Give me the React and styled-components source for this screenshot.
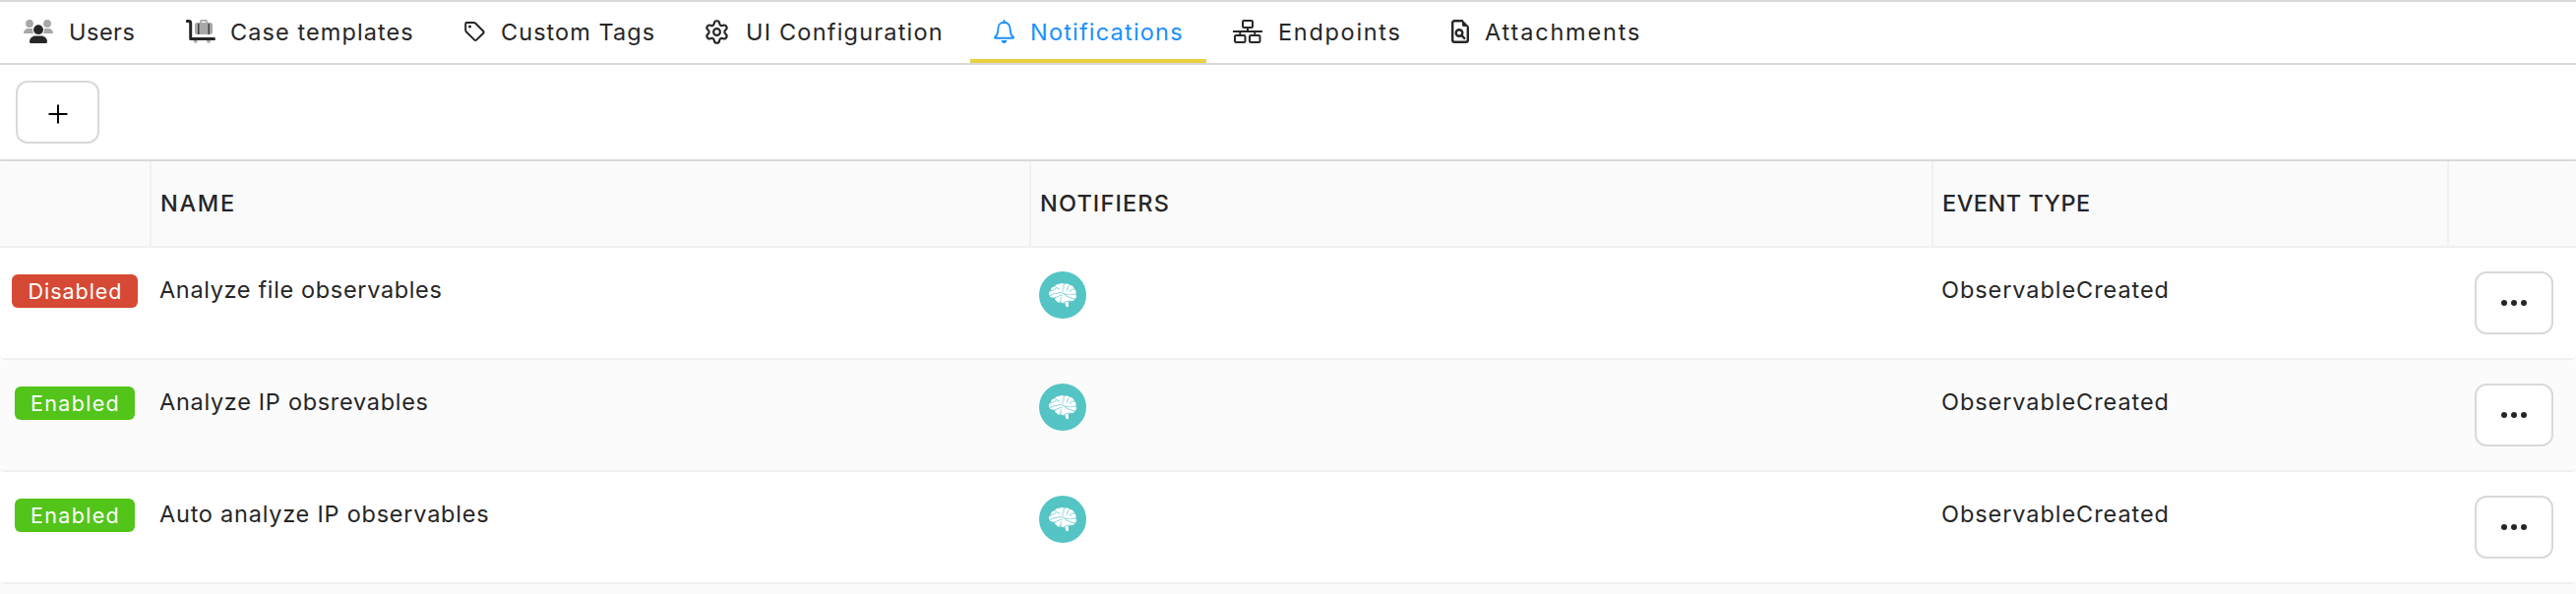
import React from "react";
import styled, { createGlobalStyle } from "styled-components";
import { Settings } from "lucide-react";

const INK = "#262626";
const MUTED = "#a8a8a8";
const BLUE = "#1890ff";

const GlobalStyle = createGlobalStyle`
  * { box-sizing: border-box; }
  body {
    margin: 0;
    background: #fff;
    color: ${INK};
    font-family: Inter, "Open Sans", sans-serif;
    font-size: 23.5px;
  }
`;

const Page = styled.div`
  height: 604px;
  overflow: hidden;
  display: flex;
  flex-direction: column;
  border-top: 2px solid #d9d9d9;
`;

const TabBar = styled.nav`
  display: flex;
  flex: 0 0 64px;
  border-bottom: 2px solid #d9d9d9;
`;

const Tab = styled.div`
  display: flex;
  align-items: center;
  width: ${(p) => p.$width}px;
  padding: 0 0 2px ${(p) => p.$inset}px;
  color: ${(p) => (p.$active ? BLUE : "inherit")};
  box-shadow: ${(p) => (p.$active ? "inset 0 -4px 0 #e8d040" : "none")};
`;

const TabIcon = styled.span`
  display: flex;
  align-items: center;
  flex: 0 0 ${(p) => p.$width}px;
  height: 24px;
`;

const Label = styled.span`
  white-space: nowrap;
  letter-spacing: ${(p) => p.$track || 0}px;
`;

const Toolbar = styled.div`
  display: flex;
  align-items: center;
  flex: 0 0 98px;
  padding-left: 16px;
  border-bottom: 2px solid #d9d9d9;
`;

const IconButton = styled.button`
  display: flex;
  align-items: center;
  justify-content: center;
  width: ${(p) => p.$width}px;
  height: 64px;
  padding: 0;
  border: 2px solid #d9d9d9;
  border-radius: 12px;
  background: #fff;
  color: ${INK};
`;

const Row = styled.div`
  display: grid;
  grid-template-columns: 154px 894px 917px 524px 1fr;
  flex: 0 0 114px;
  border-bottom: 2px solid #f0f0f0;
  border-radius: 4px;
  background: ${(p) => (p.$striped ? "#fbfbfb" : "#fff")};
`;

const HeaderRow = styled(Row)`
  flex-basis: 88px;
  background: #fafafa;
  border-radius: 4px 4px 0 0;
  font-weight: 500;
`;

const HeaderCell = styled.div`
  display: flex;
  align-items: center;
  padding: 0 0 2px 9px;
  border-right: 2px solid #f0f0f0;

  &:last-child { border-right: 0; }
`;

const Cell = styled.div`
  padding: 24px 0 0 8px;
  line-height: 38px;
`;

const StatusCell = styled(Cell)`
  display: flex;
  justify-content: center;
  padding: 27px 2px 0 0;
`;

const ActionCell = styled(Cell)`
  display: flex;
  padding-left: 26px;
`;

const Tag = styled.span`
  display: flex;
  justify-content: center;
  width: ${(p) => (p.$on ? 122 : 128)}px;
  height: 34px;
  padding-left: 1px;
  border-radius: 6px;
  background: ${(p) => (p.$on ? "#52c41a" : "#d64a35")};
  color: #fff;
  font-size: 21.5px;
  line-height: 34px;
`;

const Avatar = styled.div`
  width: 48px;
  height: 48px;
  border-radius: 50%;
  background: #55c4c5;

  svg { display: block; }
`;

const UsersIcon = () => (
  <svg width="30" height="24" viewBox="0 0 30 24">
    <g fill={MUTED}>
      <circle cx="6" cy="4" r="3.9" />
      <circle cx="24" cy="4" r="3.9" />
      <path d="M0 14c0-3 2-5 5-5h2.300c.8 0 1.400.1 2 .4C9 11 9.300 12.600 10.300 14zM30 14c0-3-2-5-5-5h-2.300c-.8 0-1.400.1-2 .4.3 1.600 0 3.200-1 4.600z" />
    </g>
    <circle cx="15" cy="10.200" r="4.900" fill={INK} />
    <path d="M6 22.500c0-3.600 2.800-6 6.200-6h5.600c3.400 0 6.200 2.400 6.200 6 0 .9-.6 1.500-1.500 1.500h-15c-.9 0-1.500-.6-1.500-1.500z" fill={INK} />
  </svg>
);

const CaseIcon = () => (
  <svg width="30" height="24" viewBox="0 0 30 24">
    <g fill={MUTED}>
      <path fillRule="evenodd" d="M14 3V2c0-1.200.8-2 2-2h4c1.200 0 2 .8 2 2v1h2.800c1.200 0 2.200 1 2.200 2.200v7.600c0 1.200-1 2.200-2.200 2.200H11.200C10 15 9 14 9 12.800V5.200C9 4 10 3 11.200 3zm1.700 0h4.600V1.700h-4.600z" />
      <circle cx="9.700" cy="21.700" r="2" />
      <circle cx="23" cy="21.700" r="2" />
    </g>
    <path d="M12.800 4v11M23.200 4v11" stroke={INK} strokeWidth="1.200" />
    <path d="M1.300 1.500h1.500c1.200 0 1.900.8 1.900 1.900v16.100h23.800" fill="none" stroke={INK} strokeWidth="3" strokeLinecap="round" strokeLinejoin="round" />
  </svg>
);

const TagIcon = () => (
  <svg width="24" height="24" viewBox="0 0 24 24">
    <path d="M3.200 4.200c0-.7.4-1.100 1.100-1.100h7.200c.7 0 1.300.2 1.800.7l7.900 7.900c.6.6.6 1.400 0 2l-7 6.900c-.6.6-1.400.6-2 0l-8.200-8.100c-.5-.5-.8-1.100-.8-1.800z" fill="none" stroke={INK} strokeWidth="2" strokeLinejoin="round" />
    <circle cx="7.500" cy="7" r="1.500" fill={INK} />
  </svg>
);

const BellIcon = () => (
  <svg width="21" height="24" viewBox="0 0 21 24" fill="none" stroke="currentColor" strokeWidth="1.900" strokeLinecap="round" strokeLinejoin="round">
    <path d="M10.500 1v1.500M10.500 2.700c-3.700 0-6.100 2.800-6.100 6.500 0 4.800-1.200 6.700-3 8.300-.5.500-.4 1.300.4 1.300h17.400c.8 0 .9-.8.4-1.300-1.800-1.600-3-3.500-3-8.300 0-3.700-2.400-6.500-6.100-6.500z" />
    <path d="M7.500 21h6c-.3 1.800-1.400 2.900-3 2.900S7.800 22.800 7.500 21z" fill="currentColor" stroke="none" />
  </svg>
);

const NetworkIcon = () => (
  <svg width="30" height="24" viewBox="0 0 30 24" fill="none" stroke={INK} strokeWidth="2">
    <rect x="10" y="1" width="10" height="7" rx="1.200" />
    <path d="M15 8v4M0 12h30M7.300 12v4M22.300 12v4" />
    <rect x="2" y="16" width="10.500" height="7" rx="1.200" />
    <rect x="17" y="16" width="10.500" height="7" rx="1.200" />
  </svg>
);

const FileSearchIcon = () => (
  <svg width="19" height="24" viewBox="0 0 19 24" fill="none" stroke={INK} strokeWidth="2.400" strokeLinecap="round">
    <path d="M11 1.200H3.200c-1.200 0-2 .8-2 2v17.600c0 1.200.8 2 2 2h11.600c1.200 0 2-.8 2-2V8" />
    <path d="M11 0l7 7h-5.500C11.600 7 11 6.400 11 5.500z" fill={INK} stroke="none" />
    <circle cx="8" cy="13.500" r="3.300" />
    <path d="M10.600 16.200l2.700 2.800" />
  </svg>
);

const PlusIcon = () => (
  <svg width="20" height="24" viewBox="0 0 20 24">
    <path d="M.5 14h19M10 4.500v19" stroke="#000" strokeWidth="2" />
  </svg>
);

const DotsIcon = () => (
  <svg width="26" height="6" viewBox="0 0 26 6" fill={INK}>
    <circle cx="3" cy="3" r="3" />
    <circle cx="13" cy="3" r="3" />
    <circle cx="23" cy="3" r="3" />
  </svg>
);

const BrainIcon = () => (
  <svg width="48" height="48" viewBox="0 0 48 48">
    <path d="M10.300 24.500c-.8-2.300 0-4 1.500-5 .2-2.500 1.900-4 4-4.300 1.200-2 3.300-2.900 5.200-2.400 1.300-1 3.300-.9 4.600 0 2.300-.9 4.700-.3 5.800 1.200 2.400.1 3.900 1.500 4 3.300 1.900 1.600 2.700 3.900 2 5.900 1.100 2 .5 4-1.200 4.800-.5 1.800-2.500 2.600-4.500 2.100l-2 .9.300 4.400c-.8.700-2 .7-2.700 0l-1-3.600c-1.300.9-3 .6-3.900-.7-1.600.9-3.900.7-4.500-1-1.700-.4-2-2.100-1.500-3.600-2.500.4-5.100.1-6.100-2z" fill="#fff" />
    <g fill="none" stroke="#55c4c5" strokeWidth=".75" strokeLinecap="round">
      <path d="M12 20c2-.2 2.800-2.400 5-2.200M16.200 15.500c1.200 1.900 3.700 1.200 4.800 3M11 24.500c2.500-.1 3.500-2.400 6-2.100 2.300.3 3.600-1.300 5.500-.9 2.800.7 4.400 2.600 7.600 2.100M25.500 13c-2 1.500.8 3.200-1.200 4.600-1 .8-.7 1.800.2 2.700M29.800 15c-1.500 1.400-.2 2.600-1.500 4.200M35 18.200c-2.300-.5-3.400.7-3.300 2.500M37 23.200c-1.700-.9-2.600.6-5 .1M16.500 26.500c3-.2 4-2.300 6.800-2.500M22.500 26.500c-1 1.200.2 2.900-1.300 4.700M36 28c-2-.9-3.600-.7-5.500-1.800s-3-.6-4.200-2.200M32 30.200c-2.400-.6-4.500.2-6.800 1.500" />
    </g>
  </svg>
);

const TABS = [
  { label: "Users", icon: <UsersIcon />, width: 161, inset: 24, slot: 46, track: 0.5 },
  { label: "Case templates", icon: <CaseIcon />, width: 283, inset: 28, slot: 45, track: 1.08 },
  { label: "Custom Tags", icon: <TagIcon />, width: 246, inset: 26, slot: 39, track: 1.05 },
  { label: "UI Configuration", icon: <Settings size={27} strokeWidth={1.9} color={INK} />, width: 296, inset: 25, slot: 43, track: 1.2 },
  { label: "Notifications", icon: <BellIcon />, width: 240, inset: 24, slot: 37, track: 1.2, active: true },
  { label: "Endpoints", icon: <NetworkIcon />, width: 222, inset: 27, slot: 46, track: 1.7 },
  { label: "Attachments", icon: <FileSearchIcon />, width: 240, inset: 27, slot: 34, track: 1.82 },
];

const ROWS = [
  { on: false, name: "Analyze file observables", track: 0.65 },
  { on: true, name: "Analyze IP obsrevables", track: 0.7 },
  { on: true, name: "Auto analyze IP observables", track: 0.765 },
];

export default function App() {
  return (
    <>
      <GlobalStyle />
      <Page>
        <TabBar>
          {TABS.map((t) => (
            <Tab key={t.label} $width={t.width} $inset={t.inset} $active={t.active}>
              <TabIcon $width={t.slot}>{t.icon}</TabIcon>
              <Label $track={t.track}>{t.label}</Label>
            </Tab>
          ))}
        </TabBar>
        <Toolbar>
          <IconButton $width={85} aria-label="Add"><PlusIcon /></IconButton>
        </Toolbar>
        <HeaderRow>
          <HeaderCell />
          <HeaderCell><Label $track={1.7}>NAME</Label></HeaderCell>
          <HeaderCell><Label $track={1.15}>NOTIFIERS</Label></HeaderCell>
          <HeaderCell><Label $track={0.5}>EVENT TYPE</Label></HeaderCell>
          <HeaderCell />
        </HeaderRow>
        {ROWS.map((r, i) => (
          <Row key={r.name} $striped={i % 2 === 1}>
            <StatusCell>
              <Tag $on={r.on}>
                <Label $track={r.on ? 1.3 : 0.95}>{r.on ? "Enabled" : "Disabled"}</Label>
              </Tag>
            </StatusCell>
            <Cell><Label $track={r.track}>{r.name}</Label></Cell>
            <Cell><Avatar><BrainIcon /></Avatar></Cell>
            <Cell><Label $track={0.93}>ObservableCreated</Label></Cell>
            <ActionCell>
              <IconButton $width={80} aria-label="More actions"><DotsIcon /></IconButton>
            </ActionCell>
          </Row>
        ))}
        <Row $striped />
      </Page>
    </>
  );
}
